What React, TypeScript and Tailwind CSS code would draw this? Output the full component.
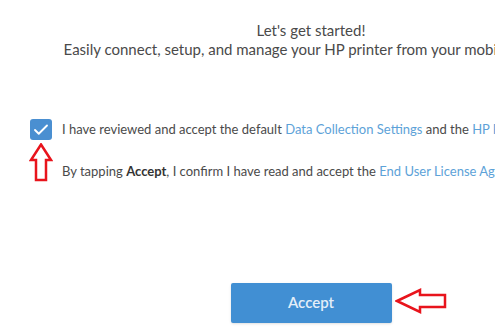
import { Check } from 'lucide-react';

export default function App() {
  return (
    <div className="relative h-[336px] w-full overflow-hidden bg-white text-[#4a4a4a]" style={{ fontFamily: 'Lato, "Open Sans", sans-serif' }}>
      <div className="flex w-[622px] flex-col">
        {/* Heading */}
        <div className="flex flex-col items-center pt-[21px] text-[15px] leading-[19px]">
          <h1>Let's get started!</h1>
          <p>Easily connect, setup, and manage your HP printer from your mobile device.</p>
        </div>

        {/* Consent rows */}
        <div className="mt-[60px] flex flex-col gap-[22px] pl-[30px] text-[13px]">
          <div className="flex items-center gap-[10px]">
            <span className="flex h-[21px] w-[22px] shrink-0 items-center justify-center rounded-[3px] bg-[#4a8fd1]">
              <Check className="h-[18px] w-[18px] text-white" strokeWidth={2.5} />
            </span>
            <span className="whitespace-nowrap">
              I have reviewed and accept the default <span className="text-[#5da2d8]">Data Collection Settings</span> and the <span className="text-[#5da2d8]">HP Privacy Statement</span>
            </span>
          </div>
          <div className="whitespace-nowrap pl-[32px]">
            By tapping <b className="font-bold text-[#333]">Accept</b>, I confirm I have read and accept the <span className="text-[#5da2d8]">End User License Agreement</span>
          </div>
        </div>

        {/* Accept button */}
        <div className="mt-[101px] flex justify-center">
          <button className="h-[40px] w-[161px] rounded-[2px] bg-[#418fd3] text-[15px] font-semibold text-[#e4eef8] shadow-sm">
            Accept
          </button>
        </div>
      </div>

      {/* Red annotation arrows */}
      <svg className="absolute left-[29px] top-[143px]" width="24" height="39" viewBox="0 0 24 39">
        <polygon points="12,1.5 22,17 17,17 17,37 7,37 7,17 2,17" fill="none" stroke="#e8141c" strokeWidth="2.5" strokeLinejoin="miter" />
      </svg>
      <svg className="absolute left-[395px] top-[288px]" width="52" height="26" viewBox="0 0 52 26">
        <polygon points="2,13 25,2 25,7 50,7 50,19 25,19 25,24" fill="none" stroke="#e8141c" strokeWidth="2.5" strokeLinejoin="miter" />
      </svg>
    </div>
  );
}
